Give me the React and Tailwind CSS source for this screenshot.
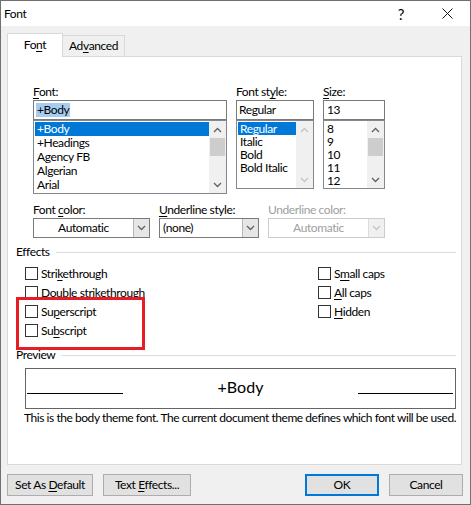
import React from 'react'

const U = ({ children }) => <span className="underline underline-offset-[2px] decoration-[1px]">{children}</span>

function Chevron({ up, color = '#606060' }) {
  return (
    <svg width="9" height="6" viewBox="0 0 9 6">
      <polyline
        points={up ? '1,5 4.5,1.5 8,5' : '1,1 4.5,4.5 8,1'}
        fill="none"
        stroke={color}
        strokeWidth="1.3"
      />
    </svg>
  )
}

function ScrollBar({ disabled }) {
  const c = disabled ? '#c4c4c4' : '#606060'
  return (
    <div className="w-[17px] h-full bg-[#f0f0f0] flex flex-col">
      <div className="h-[17px] flex items-center justify-center"><Chevron up color={c} /></div>
      {!disabled && <div className="h-[18px] bg-[#cdcdcd] mx-[1px]" />}
      <div className="flex-1" />
      <div className="h-[17px] flex items-center justify-center"><Chevron color={c} /></div>
    </div>
  )
}

function ListBox({ items, selected, rowH, height, scrollDisabled }) {
  return (
    <div className={`${height} border border-[#828790] bg-white flex`}>
      <div className="flex-1 pt-[1px] pl-[1px] overflow-hidden">
        {items.map((it, i) => (
          <div
            key={it}
            className={`${rowH} pl-[2px] flex items-center whitespace-nowrap ${i === selected ? 'bg-[#0078d7] text-white' : ''}`}
          >
            <span>{it}</span>
          </div>
        ))}
      </div>
      <ScrollBar disabled={scrollDisabled} />
    </div>
  )
}

function Combo({ value, width, center, disabled }) {
  return (
    <div className={`${width} h-[20px] border ${disabled ? 'border-[#cccccc] text-[#a0a0a0]' : 'border-[#7a7a7a]'} bg-white flex`}>
      <div className={`flex-1 flex items-center ${center ? 'justify-center' : 'pl-[3px]'}`}>
        <span>{value}</span>
      </div>
      <div className={`w-[16px] border-l ${disabled ? 'border-[#dcdcdc] bg-[#f0f0f0]' : 'border-[#b5b5b5] bg-[#e6e6e6]'} flex items-center justify-center`}>
        <Chevron color={disabled ? '#c4c4c4' : '#606060'} />
      </div>
    </div>
  )
}

function Check({ children }) {
  return (
    <div className="h-[19px] flex items-center">
      <div className="w-[13px] h-[13px] border border-[#333333] bg-white" />
      <span className="ml-[3px]">{children}</span>
    </div>
  )
}

function Button({ children, w, primary, className = '' }) {
  return (
    <div
      className={`${w} h-[22px] bg-[#e1e1e1] flex items-center justify-center ${
        primary ? 'border-2 border-[#0078d7]' : 'border border-[#adadad]'
      } ${className}`}
    >
      <span>{children}</span>
    </div>
  )
}

export default function App() {
  return (
    <div className="relative w-[471px] h-[505px] border border-[#707070] bg-[#f0f0f0] flex flex-col overflow-hidden font-['Lato','Noto_Sans',sans-serif] text-[12px] leading-[16px] tracking-[-0.4px] text-black">
      {/* Title bar */}
      <div className="h-[25px] bg-white flex items-center">
        <span className="pl-[3px]">Font</span>
        <div className="ml-auto w-[46px] h-full flex items-center justify-center text-[15px]">?</div>
        <div className="w-[46px] h-full flex items-center justify-center">
          <svg width="11" height="11" viewBox="0 0 11 11">
            <path d="M0.5 0.5 L10.5 10.5 M10.5 0.5 L0.5 10.5" stroke="#111" strokeWidth="1" />
          </svg>
        </div>
      </div>

      {/* Tabs */}
      <div className="mt-[7px] ml-[6px] flex items-end">
        <div className="relative z-10 w-[56px] h-[24px] -mb-[1px] bg-white border-l border-t border-r border-[#d9d9d9] flex items-center justify-center pb-[1px]">
          <span>Fo<U>n</U>t</span>
        </div>
        <div className="w-[62px] h-[21px] bg-[#f0f0f0] border-t border-r border-[#d9d9d9] flex items-center justify-center">
          <span>Ad<U>v</U>anced</span>
        </div>
      </div>

      {/* Panel */}
      <div className="ml-[6px] w-[455px] h-[409px] border border-[#d9d9d9] bg-white flex flex-col">
        {/* Font / style / size */}
        <div className="mt-[27px] ml-[25px] flex items-start gap-[9px]">
          <div className="w-[194px]">
            <div className="h-[16px]"><U>F</U>ont:</div>
            <div className="h-[20px] border border-[#7a7a7a] flex items-center pl-[2px]">
              <span className="bg-[#a6cdf0] px-[1px] leading-[14px]">+Body</span>
            </div>
            <ListBox
              items={['+Body', '+Headings', 'Agency FB', 'Algerian', 'Arial']}
              selected={0}
              rowH="h-[14px] leading-[14px]"
              height="h-[74px]"
            />
          </div>
          <div className="w-[78px]">
            <div className="h-[16px]">Font st<U>y</U>le:</div>
            <div className="h-[20px] border border-[#7a7a7a] flex items-center pl-[2px]">Regular</div>
            <ListBox
              items={['Regular', 'Italic', 'Bold', 'Bold Italic']}
              selected={0}
              rowH="h-[13px] leading-[13px]"
              height="h-[69px]"
              scrollDisabled
            />
          </div>
          <div className="w-[62px]">
            <div className="h-[16px]"><U>S</U>ize:</div>
            <div className="h-[20px] border border-[#7a7a7a] flex items-center pl-[3px]">13</div>
            <ListBox
              items={['8', '9', '10', '11', '12']}
              selected={-1}
              rowH="h-[13px] leading-[13px]"
              height="h-[69px]"
            />
          </div>
        </div>

        {/* Colours / underline */}
        <div className="mt-[8px] ml-[25px] flex items-start gap-[9px]">
          <div>
            <div className="h-[16px]">Font <U>c</U>olor:</div>
            <Combo value="Automatic" width="w-[117px]" center />
          </div>
          <div>
            <div className="h-[16px]"><U>U</U>nderline style:</div>
            <Combo value="(none)" width="w-[100px]" />
          </div>
          <div>
            <div className="h-[16px] text-[#a0a0a0]">Underline color:</div>
            <Combo value="Automatic" width="w-[117px]" center disabled />
          </div>
        </div>

        {/* Effects */}
        <div className="mt-[6px] ml-[8px] mr-[5px] h-[16px] flex items-center">
          <span>Effects</span>
          <div className="flex-1 h-px bg-[#dcdcdc] ml-[6px]" />
        </div>
        <div className="mt-[4px] ml-[17px] flex">
          <div className="w-[293px]">
            <Check>Stri<U>k</U>ethrough</Check>
            <Check>Doub<U>l</U>e strikethrough</Check>
            <Check>Su<U>p</U>erscript</Check>
            <Check>Su<U>b</U>script</Check>
          </div>
          <div>
            <Check>S<U>m</U>all caps</Check>
            <Check><U>A</U>ll caps</Check>
            <Check><U>H</U>idden</Check>
          </div>
        </div>

        {/* Preview */}
        <div className="mt-[7px] ml-[8px] mr-[5px] h-[16px] flex items-center">
          <span>Preview</span>
          <div className="flex-1 h-px bg-[#dcdcdc] ml-[6px]" />
        </div>
        <div className="mt-[5px] ml-[17px] w-[431px] h-[41px] border border-[#646464] flex items-start">
          <div className="ml-[1px] mt-[24px] w-[96px] h-px bg-black" />
          <div className="flex-1 text-center mt-[8px] text-[16px] leading-[20px] tracking-normal">+Body</div>
          <div className="mr-[2px] mt-[24px] w-[95px] h-px bg-black" />
        </div>
        <div className="mt-[1px] ml-[16px] whitespace-nowrap tracking-[-0.45px]">
          This is the body theme font. The current document theme defines which font will be used.
        </div>
      </div>

      {/* Buttons */}
      <div className="mt-[9px] ml-[6px] mr-[7px] flex">
        <Button w="w-[86px]">Set As <U>D</U>efault</Button>
        <Button w="w-[88px]" className="ml-[10px]">Text <U>E</U>ffects...</Button>
        <Button w="w-[74px]" primary className="ml-auto">OK</Button>
        <Button w="w-[74px]" className="ml-[10px]">Cancel</Button>
      </div>

      {/* annotation */}
      <div className="absolute left-[15px] top-[296px] w-[129px] h-[53px] border-[3px] border-[#e81c24]" />
    </div>
  )
}
